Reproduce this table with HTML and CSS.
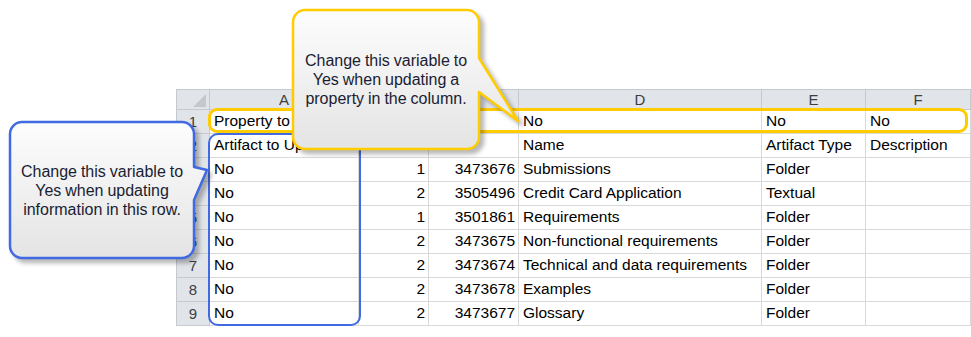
FILE: index.html
```html
<!DOCTYPE html>
<html lang="en">
<head>
    <meta charset="UTF-8">
    <meta name="viewport" content="width=device-width, initial-scale=1.0">
    <title>Update variables</title>
    <link rel="stylesheet" href="styles.css">
</head>
<body>
    <div class="sheet">
        <!-- header row; B and C sit under the column callout -->
        <div class="corner"><span class="corner-mark"></span></div>
        <div class="col-head">A</div>
        <div class="col-head"></div>
        <div class="col-head"></div>
        <div class="col-head">D</div>
        <div class="col-head">E</div>
        <div class="col-head">F</div>

        <div class="row-head">1</div>
        <div class="cell">Property to Update</div>
        <div class="cell"></div>
        <div class="cell"></div>
        <div class="cell">No</div>
        <div class="cell">No</div>
        <div class="cell">No</div>

        <div class="row-head">2</div>
        <div class="cell">Artifact to Update</div>
        <div class="cell"></div>
        <div class="cell"></div>
        <div class="cell">Name</div>
        <div class="cell">Artifact Type</div>
        <div class="cell">Description</div>

        <div class="row-head">3</div>
        <div class="cell">No</div>
        <div class="cell num">1</div>
        <div class="cell num">3473676</div>
        <div class="cell">Submissions</div>
        <div class="cell">Folder</div>
        <div class="cell"></div>

        <div class="row-head">4</div>
        <div class="cell">No</div>
        <div class="cell num">2</div>
        <div class="cell num">3505496</div>
        <div class="cell">Credit Card Application</div>
        <div class="cell">Textual</div>
        <div class="cell"></div>

        <div class="row-head">5</div>
        <div class="cell">No</div>
        <div class="cell num">1</div>
        <div class="cell num">3501861</div>
        <div class="cell">Requirements</div>
        <div class="cell">Folder</div>
        <div class="cell"></div>

        <div class="row-head">6</div>
        <div class="cell">No</div>
        <div class="cell num">2</div>
        <div class="cell num">3473675</div>
        <div class="cell">Non-functional requirements</div>
        <div class="cell">Folder</div>
        <div class="cell"></div>

        <div class="row-head">7</div>
        <div class="cell">No</div>
        <div class="cell num">2</div>
        <div class="cell num">3473674</div>
        <div class="cell">Technical and data requirements</div>
        <div class="cell">Folder</div>
        <div class="cell"></div>

        <div class="row-head">8</div>
        <div class="cell">No</div>
        <div class="cell num">2</div>
        <div class="cell num">3473678</div>
        <div class="cell">Examples</div>
        <div class="cell">Folder</div>
        <div class="cell"></div>

        <div class="row-head">9</div>
        <div class="cell">No</div>
        <div class="cell num">2</div>
        <div class="cell num">3473677</div>
        <div class="cell">Glossary</div>
        <div class="cell">Folder</div>
        <div class="cell"></div>
    </div>

    <!-- highlight frames -->
    <div class="frame frame-row"></div>
    <div class="frame frame-col"></div>

    <!-- row callout -->
    <div class="callout callout-row">
        <svg width="210" height="148" viewBox="0 0 210 148">
            <defs>
                <linearGradient id="fillRow" x1="0" y1="0" x2="0" y2="1">
                    <stop offset="0" stop-color="#fdfdfd"/>
                    <stop offset="1" stop-color="#e4e4e4"/>
                </linearGradient>
            </defs>
            <path d="M16 4 H176 A12 12 0 0 1 188 16 V49 L201 52 L188 82 V128 A12 12 0 0 1 176 140 H16 A12 12 0 0 1 4 128 V16 A12 12 0 0 1 16 4 Z"
                  fill="url(#fillRow)" stroke="#4169e1" stroke-width="2.5" stroke-linejoin="round"/>
        </svg>
        <p class="callout-text">Change this variable to<br>Yes when updating<br>information in this row.</p>
    </div>

    <!-- column callout -->
    <div class="callout callout-col">
        <svg width="240" height="150" viewBox="0 0 240 150">
            <defs>
                <linearGradient id="fillCol" x1="0" y1="0" x2="0" y2="1">
                    <stop offset="0" stop-color="#fdfdfd"/>
                    <stop offset="1" stop-color="#e4e4e4"/>
                </linearGradient>
            </defs>
            <path d="M15 2 H177 A12 12 0 0 1 189 14 V50 L228 113 L189 84 V129 A12 12 0 0 1 177 141 H15 A12 12 0 0 1 3 129 V14 A12 12 0 0 1 15 2 Z"
                  fill="url(#fillCol)" stroke="#ffcc00" stroke-width="2.5" stroke-linejoin="round"/>
        </svg>
        <p class="callout-text">Change this variable to<br>Yes when updating a<br>property in the column.</p>
    </div>
</body>
</html>
```

FILE: styles.css
```css
body {
    margin: 0;
    background: #fff;
    font-family: "Liberation Sans", Arial, sans-serif;
    color: #000;
    position: relative;
    overflow: hidden;
    height: 337px;
}
.sheet {
    display: grid;
    grid-template-columns: 33px 149px 70px 90px 243px 104px 105px;
    grid-template-rows: 20px repeat(9, 24px);
    margin: 89px 0 0 176px;
    width: 795px;
    box-sizing: border-box;
    border-left: 1px solid #c6c9cd;
    border-top: 1px solid #c6c9cd;
    font-size: 15.5px;
}
.sheet > div {
    box-sizing: border-box;
    border-right: 1px solid #d9d9d9;
    border-bottom: 1px solid #d9d9d9;
    white-space: nowrap;
    overflow: hidden;
}
.corner,
.col-head,
.row-head {
    background: #e1e4e8;
    color: #3c3f44;
}
.sheet > .corner,
.sheet > .col-head,
.sheet > .row-head {
    border-color: #c6c9cd;
}
.corner {
    display: flex;
    align-items: flex-end;
    justify-content: flex-end;
    padding: 0 3px 2px 0;
}
.corner-mark {
    width: 13px;
    height: 13px;
    background: #c4c7cb;
    clip-path: polygon(100% 0, 100% 100%, 0 100%);
}
.col-head {
    text-align: center;
    line-height: 19px;
    font-size: 15px;
}
.row-head {
    text-align: center;
    line-height: 24px;
    font-size: 15px;
}
.cell {
    padding: 0 4px;
    line-height: 22px;
}
.num {
    text-align: right;
    padding-right: 3px;
}

/* highlight frames over the grid */
.frame {
    position: absolute;
    box-sizing: border-box;
    border-radius: 9px;
}
.frame-row {
    left: 208px;
    top: 108px;
    width: 760px;
    height: 25px;
    border: 3px solid #ffcc00;
}
.frame-col {
    left: 208px;
    top: 133px;
    width: 153px;
    height: 193px;
    border: 2px solid #4169e1;
    border-radius: 10px;
}

/* callouts: bubble shape underneath, text on top */
.callout {
    position: absolute;
    display: grid;
}
.callout svg {
    grid-area: 1 / 1;
    filter: drop-shadow(4px 4px 2px rgba(0, 0, 0, 0.28));
}
.callout-text {
    grid-area: 1 / 1;
    position: relative;
    z-index: 1;
    margin: 0;
    display: flex;
    align-items: center;
    justify-content: center;
    text-align: center;
    font-size: 16px;
    line-height: 19px;
    word-spacing: -0.5px;
    color: #1a1d33;
}
.callout-row {
    left: 6px;
    top: 118px;
}
.callout-row .callout-text {
    padding: 4px 22px 8px 4px;
}
.callout-col {
    left: 290px;
    top: 8px;
}
.callout-col .callout-text {
    padding: 2px 51px 9px 3px;
}
```
